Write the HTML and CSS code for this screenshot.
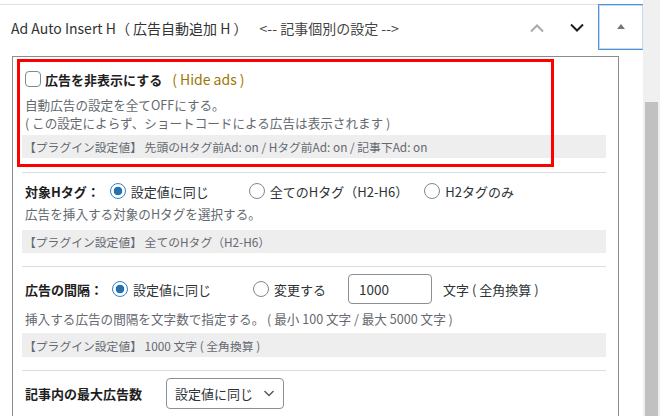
FILE: index.html
```html
<!DOCTYPE html>
<html lang="ja">
<head>
<meta charset="utf-8">
<title>Ad Auto Insert H</title>
<link rel="stylesheet" href="styles.css">
</head>
<body>
<div class="screen">
  <div class="main">
    <div class="header">
      <h2 class="title">Ad Auto Insert H（ 広告自動追加 H ） <span class="sub">&lt;-- 記事個別の設定 --&gt;</span></h2>
      <div class="actions">
        <button class="icon-btn up" aria-label="上へ移動">
          <svg width="16" height="10" viewBox="0 0 16 10"><polyline points="2,8.5 8,2.5 14,8.5" fill="none" stroke="currentColor" stroke-width="2"/></svg>
        </button>
        <button class="icon-btn down" aria-label="下へ移動">
          <svg width="16" height="10" viewBox="0 0 16 10"><polyline points="2,1.5 8,7.5 14,1.5" fill="none" stroke="currentColor" stroke-width="2"/></svg>
        </button>
        <button class="toggle" aria-label="パネルを切り替え">
          <svg width="10" height="6" viewBox="0 0 10 6"><polygon points="1,6 5,1 9,6" fill="currentColor"/></svg>
        </button>
      </div>
    </div>

    <div class="panel">
      <div class="section s1">
        <label class="check-row">
          <input type="checkbox" class="check">
          <strong class="label-strong">広告を非表示にする</strong>
          <span class="en">( Hide ads )</span>
        </label>
        <p class="desc">自動広告の設定を全てOFFにする。</p>
        <p class="desc desc-next">( この設定によらず、ショートコードによる広告は表示されます )</p>
        <div class="bar">【プラグイン設定値】 先頭のHタグ前Ad: on / Hタグ前Ad: on / 記事下Ad: on</div>
      </div>

      <div class="section s2">
        <div class="row">
          <span class="field-label">対象Hタグ：</span>
          <label class="opt opt-wide"><input type="radio" name="htag" class="radio" checked>設定値に同じ</label>
          <label class="opt opt-narrow"><input type="radio" name="htag" class="radio">全てのHタグ（H2-H6）</label>
          <label class="opt"><input type="radio" name="htag" class="radio">H2タグのみ</label>
        </div>
        <p class="desc">広告を挿入する対象のHタグを選択する。</p>
        <div class="bar">【プラグイン設定値】 全てのHタグ（H2-H6）</div>
      </div>

      <div class="section s3">
        <div class="row row-input">
          <span class="field-label">広告の間隔：</span>
          <label class="opt opt-wide"><input type="radio" name="interval" class="radio" checked>設定値に同じ</label>
          <label class="opt opt-change"><input type="radio" name="interval" class="radio">変更する</label>
          <input type="text" class="text-input" value="1000">
          <span class="unit">文字 ( 全角換算 )</span>
        </div>
        <p class="desc">挿入する広告の間隔を文字数で指定する。 ( 最小 100 文字 / 最大 5000 文字 )</p>
        <div class="bar">【プラグイン設定値】 1000 文字 ( 全角換算 )</div>
      </div>

      <div class="section s4">
        <div class="row row-input">
          <span class="field-label wide">記事内の最大広告数</span>
          <div class="select">設定値に同じ
            <svg width="12" height="8" viewBox="0 0 12 8"><polyline points="1.5,2 6,6.5 10.5,2" fill="none" stroke="currentColor" stroke-width="1.4"/></svg>
          </div>
        </div>
      </div>
    </div>

    <div class="highlight"></div>
  </div>
  <div class="scrollbar"><div class="thumb"></div></div>
</div>
</body>
</html>
```

FILE: styles.css
```css
* { box-sizing: border-box; }

html, body {
  margin: 0;
  padding: 0;
  background: #fff;
}

body {
  font-family: "Noto Sans CJK JP", "Noto Sans", sans-serif;
  color: #1e1e1e;
  font-size: 13px;
}

.screen {
  display: flex;
  width: 666px;
  height: 416px;
  overflow: hidden;
}

.main {
  position: relative;
  width: 643px;
  flex: none;
  padding-top: 4px;
}

.scrollbar {
  width: 17px;
  flex: none;
  background: #f0f0f0;
  padding: 102px 2px 0 2px;
}

.thumb {
  height: 100%;
  background: #c1c1c1;
}

/* header */
.header {
  display: flex;
  align-items: stretch;
  height: 46px;
  border-top: 1px solid #e0e0e0;
}

.title {
  flex: 1;
  margin: 0;
  padding-left: 11px;
  font-size: 14px;
  font-weight: 400;
  color: #333;
  display: flex;
  align-items: center;
  gap: 12px;
  white-space: nowrap;
}

.title .sub {
  color: #444;
}

.actions {
  display: flex;
  align-items: stretch;
}

.icon-btn {
  width: 40px;
  border: 0;
  background: none;
  padding: 0;
  display: flex;
  align-items: center;
  justify-content: center;
}

.icon-btn.up { color: #a7aaad; }
.icon-btn.down { color: #1e1e1e; margin-right: 1px; }

.toggle {
  width: 45px;
  margin-top: -1px;
  height: 46px;
  border: 1px solid #4f94d4;
  border-right: 0;
  box-shadow: inset 0 0 0 1px rgba(79, 148, 212, 0.35);
  background: #fff;
  color: #777;
  padding: 0 0 2px 0;
  display: flex;
  align-items: center;
  justify-content: center;
}

/* panel */
.panel {
  margin: 6px 0 0 12px;
  width: 607px;
  height: 400px;
  border: 1px solid #8c8c8c;
  padding: 0 12px 0 9px;
}

.section {
  border-bottom: 1px solid #dcdcde;
  padding: 7px 0 13px;
}

.section.s1 { padding-top: 11px; padding-bottom: 14px; }
.section.s4 { border-bottom: 0; }

.check-row {
  display: flex;
  align-items: center;
  height: 22px;
  padding-left: 3px;
}

.check {
  appearance: none;
  -webkit-appearance: none;
  width: 16px;
  height: 16px;
  border: 1px solid #7e8993;
  border-radius: 4px;
  margin: 0 4px 0 0;
  background: #fff;
}

.label-strong {
  font-size: 13px;
  font-weight: 700;
  color: #1e1e1e;
}

.en {
  margin-left: 10px;
  font-size: 14px;
  color: #9a7800;
}

.desc {
  margin: 7px 0 0;
  padding-left: 3px;
  height: 16px;
  line-height: 16px;
  font-size: 12.6px;
  color: #646970;
  white-space: nowrap;
}

.desc.desc-next { margin-top: 2.4px; }

.s1 .bar { margin-top: 4px; }
.s2 .desc { margin-top: 4px; }
.s3 .desc { margin-top: 7px; }

.bar {
  margin-top: 8px;
  height: 23px;
  background: #eeeeee;
  display: flex;
  align-items: center;
  padding-left: 2px;
  font-size: 11.8px;
  color: #646970;
  white-space: nowrap;
}

.s3 .bar { margin-top: 6px; height: 24px; }

.row {
  display: flex;
  align-items: center;
  height: 22px;
  padding-left: 3px;
}

.row.row-input { height: 30px; }

.field-label {
  font-size: 13px;
  font-weight: 700;
  color: #1e1e1e;
  margin-right: 10px;
}

.s3 .field-label { margin-right: 9px; }
.field-label.wide { margin-right: 24px; }

.opt {
  display: flex;
  align-items: center;
  font-size: 13px;
  color: #2c3338;
  white-space: nowrap;
}

.opt-wide { margin-right: 40px; }
.s3 .opt-wide { margin-right: 42px; }
.opt-narrow { margin-right: 16px; }
.opt-change { margin-right: 22px; }

.radio {
  appearance: none;
  -webkit-appearance: none;
  width: 16px;
  height: 16px;
  border: 1px solid #7e8993;
  border-radius: 50%;
  margin: 0 5px 0 0;
  background: #fff;
  position: relative;
  flex: none;
}

.radio:checked {
  border-color: #3582c4;
  background: radial-gradient(circle, #2271b1 0 4px, #fff 4.6px);
}

.text-input {
  width: 84px;
  height: 30px;
  border: 1px solid #8c8f94;
  border-radius: 4px;
  padding: 0 10px;
  font-family: inherit;
  font-size: 13.5px;
  color: #2c3338;
  margin-right: 11px;
}

.unit {
  font-size: 13px;
  color: #2c3338;
}

.select {
  width: 118px;
  height: 31px;
  border: 1px solid #8c8f94;
  border-radius: 4px;
  display: flex;
  align-items: center;
  justify-content: space-between;
  padding: 0 8px 0 8px;
  font-size: 13px;
  color: #2c3338;
}

.select svg { color: #50575e; }

/* overlay annotation */
.highlight {
  position: absolute;
  left: 17px;
  top: 59px;
  width: 537px;
  height: 108px;
  border: 3px solid #f00;
  pointer-events: none;
}
```
